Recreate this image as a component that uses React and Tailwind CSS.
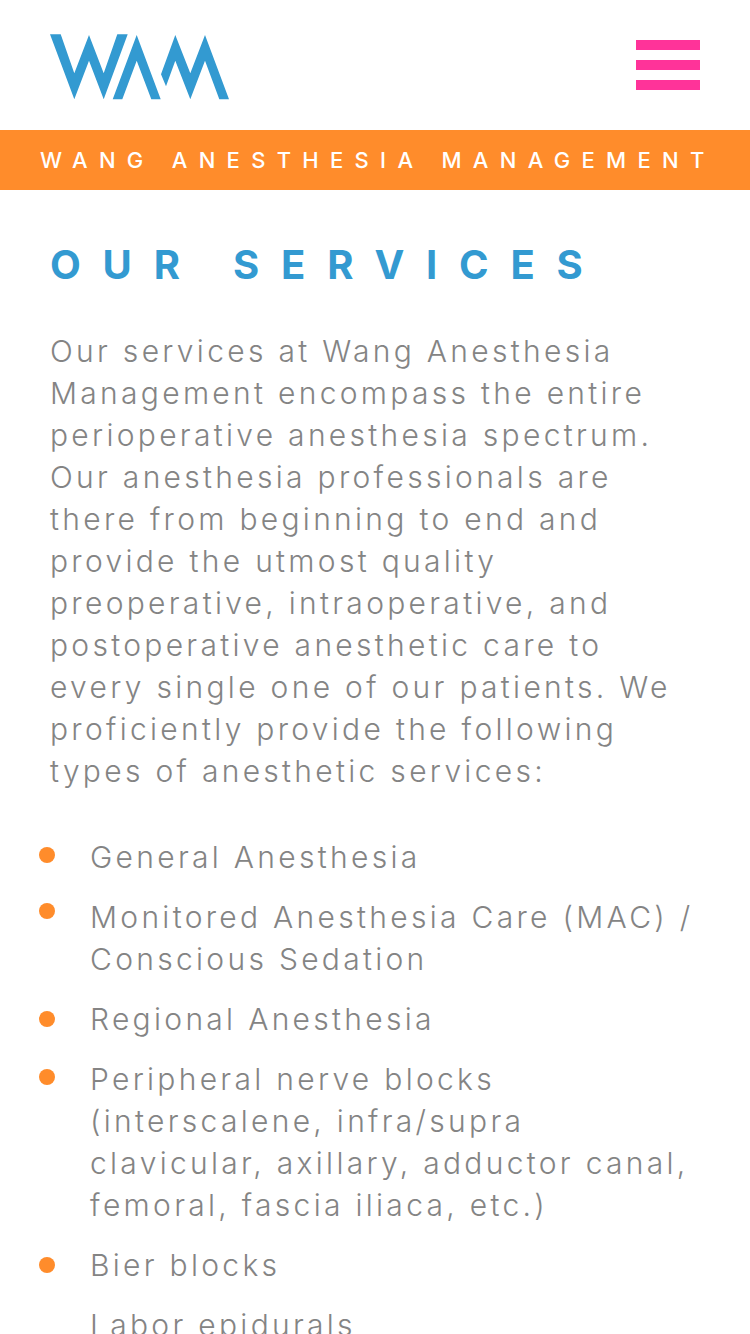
const body = [
  "Our services at Wang Anesthesia",
  "Management encompass the entire",
  "perioperative anesthesia spectrum.",
  "Our anesthesia professionals are",
  "there from beginning to end and",
  "provide the utmost quality",
  "preoperative, intraoperative, and",
  "postoperative anesthetic care to",
  "every single one of our patients. We",
  "proficiently provide the following",
  "types of anesthetic services:",
];
const items = [
  { bullet: "mt-[11px]", lines: ["General Anesthesia"] },
  { bullet: "mt-[7px]", lines: ["Monitored Anesthesia Care (MAC) /", "Conscious Sedation"] },
  { bullet: "mt-[13px]", lines: ["Regional Anesthesia"] },
  { bullet: "mt-[11px]", lines: ["Peripheral nerve blocks", "(interscalene, infra/supra", "clavicular, axillary, adductor canal,", "femoral, fascia iliaca, etc.)"] },
  { bullet: "mt-[13px]", lines: ["Bier blocks"] },
];
function Lines({ lines }) {
  return lines.map((l) => <div key={l} className="whitespace-nowrap">{l}</div>);
}
export default function App() {
  return (
    <div className="h-[1334px] overflow-hidden bg-white font-['Inter','Liberation_Sans',sans-serif] text-[#848484]">
      <header className="flex h-[130px] items-center justify-between px-[50px]">
        <svg width="180" height="66" viewBox="50 34 180 66" className="mt-[4px] block" fill="#339ad1">
          <polygon points="50,34.3 60.7,34.3 74.3,73.3 89,35 103.7,73.3 117.3,34.3 127.7,34.3 103.7,99.3 89,60.7 74.3,99.3" />
          <polygon points="112.7,99.3 136.7,35 160.7,99.3 151.3,99.3 136.7,60.7 122.3,99.3" />
          <polygon points="161,74.3 175.3,35 190.3,73.3 205,35 229,99.3 219.3,99.3 205,60.7 190.3,99.3 175.3,60.7 166,86.3" />
        </svg>
        <div className="flex w-[64px] flex-col gap-[10px]">
          <div className="h-[10px] bg-[#ff3399]" />
          <div className="h-[10px] bg-[#ff3399]" />
          <div className="h-[10px] bg-[#ff3399]" />
        </div>
      </header>
      <div className="flex h-[60px] items-center whitespace-nowrap bg-[#ff8c2b] pl-[40px] text-[22px] font-medium tracking-[11.3px] text-white">
        WANG ANESTHESIA MANAGEMENT
      </div>
      <main className="pl-[50px] pt-[50px]">
        <h1 className="text-[40px] font-bold leading-[50px] tracking-[21.8px] text-[#339ad1]">OUR SERVICES</h1>
        <div className="mt-[40px] text-[30px] font-light leading-[42px] tracking-[3.3px]">
          <Lines lines={body} />
        </div>
        <ul className="mt-[44px] -ml-[11px]">
          {items.map(({ bullet, lines }) => (
            <li key={lines[0]} className="mb-[18px] flex">
              <span className={`${bullet} h-[16px] w-[16px] shrink-0 rounded-full bg-[#ff8c2b]`} />
              <div className="ml-[35px] text-[30px] font-light leading-[42px] tracking-[3.3px]">
                <Lines lines={lines} />
              </div>
            </li>
          ))}
          <li className="flex pl-[51px] text-[30px] font-light leading-[42px] tracking-[3.3px]">Labor epidurals</li>
        </ul>
      </main>
    </div>
  );
}
